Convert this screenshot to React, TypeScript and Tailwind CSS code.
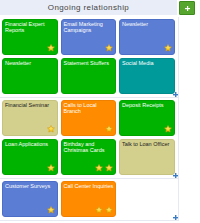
import React from "react";

type Tile = { label: string; color: string; text: string; stars: number };

const groups: Tile[][] = [
  [
    { label: "Financial Expert Reports", color: "bg-[#00b300] border-[#00a300]", text: "text-white", stars: 1 },
    { label: "Email Marketing Campaigns", color: "bg-[#5b7dd3] border-[#4d6ec6]", text: "text-white", stars: 1 },
    { label: "Newsletter", color: "bg-[#5b7dd3] border-[#4d6ec6]", text: "text-white", stars: 1 },
    { label: "Newsletter", color: "bg-[#00b300] border-[#00a300]", text: "text-white", stars: 0 },
    { label: "Statement Stuffers", color: "bg-[#00b300] border-[#00a300]", text: "text-white", stars: 0 },
    { label: "Social Media", color: "bg-[#009a9b] border-[#008c8d]", text: "text-white", stars: 0 },
  ],
  [
    { label: "Financial Seminar", color: "bg-[#d3cf8d] border-[#c6c27f]", text: "text-[#222]", stars: 1 },
    { label: "Calls to Local Branch", color: "bg-[#ff8c00] border-[#f08000]", text: "text-white", stars: 1 },
    { label: "Deposit Receipts", color: "bg-[#00b300] border-[#00a300]", text: "text-white", stars: 1 },
    { label: "Loan Applications", color: "bg-[#00b300] border-[#00a300]", text: "text-white", stars: 1 },
    { label: "Birthday and Christmas Cards", color: "bg-[#00b300] border-[#00a300]", text: "text-white", stars: 2 },
    { label: "Talk to Loan Officer", color: "bg-[#d3cf8d] border-[#c6c27f]", text: "text-[#222]", stars: 0 },
  ],
  [
    { label: "Customer Surveys", color: "bg-[#5b7dd3] border-[#4d6ec6]", text: "text-white", stars: 1 },
    { label: "Call Center Inquiries", color: "bg-[#ff8c00] border-[#f08000]", text: "text-white", stars: 2 },
  ],
];

function Star() {
  return (
    <svg width="8" height="8" viewBox="0 0 24 24" className="block">
      <defs>
        <linearGradient id="sg" x1="0" y1="0" x2="0" y2="1">
          <stop offset="0" stopColor="#fff3a0" />
          <stop offset="1" stopColor="#f5c400" />
        </linearGradient>
      </defs>
      <path
        d="M12 1.5l3.1 6.6 7.2.9-5.3 5 1.4 7.2L12 17.6l-6.4 3.6L7 14l-5.3-5 7.2-.9z"
        fill="url(#sg)"
        stroke="#d99a00"
        strokeWidth="1.8"
        strokeLinejoin="round"
      />
    </svg>
  );
}

function PlusMark() {
  return (
    <svg width="5" height="5" viewBox="0 0 5 5" className="block">
      <rect x="2" y="0" width="1.4" height="5" fill="#3b7cc2" />
      <rect x="0" y="2" width="5" height="1.4" fill="#3b7cc2" />
    </svg>
  );
}

export default function App() {
  return (
    <div className="w-[200px] h-[223px] bg-white overflow-hidden font-['Liberation_Sans',Arial,sans-serif]">
      <div className="flex items-start">
        <div className="w-[177px] h-[15px] bg-[#e9edf7] flex items-center justify-center text-[8px] tracking-[0.4px] text-[#444]">
          Ongoing relationship
        </div>
        <div className="ml-[2px] mt-[1px] w-[16px] h-[14px] bg-[#55a52e] border border-[#3f8a1c] rounded-[1px] flex items-center justify-center">
          <svg width="5" height="5" viewBox="0 0 5 5" className="block">
            <rect x="2" y="0" width="1.2" height="5" fill="#fff" />
            <rect x="0" y="2" width="5" height="1.2" fill="#fff" />
          </svg>
        </div>
      </div>
      <div className="mt-[2px] flex flex-col">
        {groups.map((g, gi) => (
          <div
            key={gi}
            className="relative w-[179px] border-r border-b border-[#e6e9f1] pl-[2px] pt-[2px] pb-[3px]"
          >
            <div className="grid grid-cols-[repeat(3,55.5px)] gap-x-[3px] gap-y-[3px]">
              {g.map((t, ti) => (
                <div
                  key={ti}
                  className={`relative h-[36px] rounded-[3px] border ${t.color} ${t.text} pl-[2px] pr-0 pt-[1px] text-[5.5px] leading-[6px]`}
                >
                  {t.label}
                  {t.stars > 0 && (
                    <div className="absolute right-[2px] bottom-[2px] flex gap-[2px]">
                      {Array.from({ length: t.stars }).map((_, si) => (
                        <Star key={si} />
                      ))}
                    </div>
                  )}
                </div>
              ))}
            </div>
            <div className="absolute right-[0px] bottom-[0px]">
              <PlusMark />
            </div>
          </div>
        ))}
      </div>
    </div>
  );
}
